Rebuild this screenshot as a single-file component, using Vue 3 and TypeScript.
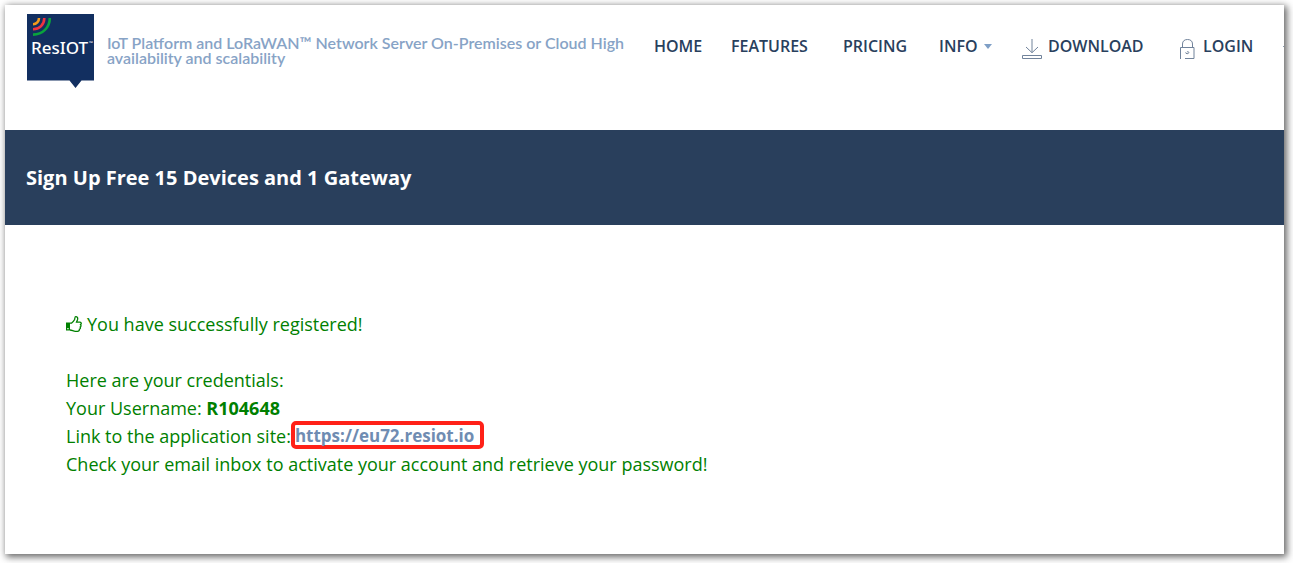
<script setup lang="ts">
interface NavItem {
  label: string
  icon?: 'download' | 'lock'
  menu?: boolean
}

const navItems: NavItem[] = [
  { label: 'HOME' },
  { label: 'FEATURES' },
  { label: 'PRICING' },
  { label: 'INFO', menu: true },
  { label: 'DOWNLOAD', icon: 'download' },
  { label: 'LOGIN', icon: 'lock' },
]

const username = 'R104648'
const siteUrl = 'https://eu72.resiot.io'
</script>

<template>
  <div class="page">
    <div class="sheet">
      <header class="header">
        <a class="brand" href="#" aria-label="ResIOT">
          <svg width="67" height="74" viewBox="0 0 67 74" aria-hidden="true">
            <path d="M0 0H67V66.500H54.500L48.500 74L42.500 66.500H0Z" fill="#122f60" />
            <g fill="none" stroke-width="2.600">
              <path d="M6 10.300C9.500 10.300 12 7.500 12 4" stroke="#f39a1b" />
              <path d="M6 15.300C12.500 15.300 17.300 10.500 17.300 4" stroke="#ef3340" />
              <path d="M6 20.600C15.500 20.600 22.800 13.500 22.800 4" stroke="#0aa33c" />
            </g>
            <text x="4" y="40" class="logo-text">ResIOT</text>
            <text x="62" y="31" class="logo-mark">™</text>
          </svg>
        </a>
        <p class="tagline">IoT Platform and LoRaWAN™ Network Server On-Premises or Cloud High availability and scalability</p>
        <nav class="nav">
          <a v-for="item in navItems" :key="item.label" class="nav-link" href="#">
            <svg v-if="item.icon === 'download'" class="nav-icon" width="20" height="21" viewBox="0 0 20 21" aria-hidden="true">
              <path d="M10 0V13.500M4 8L10 13.700L16 8" />
              <path d="M0.500 16.500H19.500V19.500H0.500Z" />
            </svg>
            <svg v-if="item.icon === 'lock'" class="nav-icon lock" width="15" height="21" viewBox="0 0 15 21" aria-hidden="true">
              <path d="M2.500 8.500V5C2.500 2 4.500 0.500 7.500 0.500S12.500 2 12.500 5V8.500" />
              <path d="M0.500 20V8.500H14V19.500H5" />
              <path d="M5.500 13.500C5.500 15 8.800 15.200 8.800 13.500C8.800 12.300 7 12.300 7 13.300" />
            </svg>
            <span>{{ item.label }}</span>
            <svg v-if="item.menu" class="caret" width="8" height="5" viewBox="0 0 8 5" aria-hidden="true">
              <path d="M0 0H8L4 5Z" />
            </svg>
          </a>
          <span class="nav-more" aria-hidden="true"></span>
        </nav>
      </header>

      <section class="banner">
        <h1>Sign Up Free 15 Devices and 1 Gateway</h1>
      </section>

      <main class="content">
        <p class="success">
          <svg width="16" height="17" viewBox="0 0 16 17" aria-hidden="true">
            <path d="M0 6.500H4V14.500H0Z" fill="#008000" />
            <rect x="1.300" y="12" width="1.300" height="1.300" fill="#fff" />
            <path d="M4 7.200H5.400C6.700 6.100 8.200 4.300 8.600 3.500C8.900 2.300 8.800 0.700 9.700 0.700C11.500 0.700 12 2 11.500 3.700L10.500 6.200H14C15.400 6.400 15.700 8 14.500 8.600C15.300 9.500 15.100 10.600 14.200 11.100C14.700 12 14.400 12.900 13.400 13.300C13.500 14.600 12.800 15.300 11.400 15.300H9.300C7.400 15.300 6 14 4 14" fill="none" stroke="#008000" stroke-width="1.300" />
          </svg>
          <span>You have successfully registered!</span>
        </p>
        <p>Here are your credentials:</p>
        <p>Your Username: <strong>{{ username }}</strong></p>
        <p class="site">
          <span>Link to the application site:</span>
          <a class="site-link" :href="siteUrl">{{ siteUrl }}</a>
        </p>
        <p>Check your email inbox to activate your account and retrieve your password!</p>
      </main>
    </div>
  </div>
</template>

<style>
body {
  margin: 0;
  background: #fff;
}
</style>

<style scoped>
.page {
  box-sizing: border-box;
  min-height: 100vh;
  padding: 5px 9px 9px 5px;
  display: flex;
  overflow: hidden;
  font-family: "Open Sans", "Noto Sans", sans-serif;
}

.sheet {
  flex: 1;
  min-width: 0;
  background: #fff;
  box-shadow: 2px 2px 7px 1px rgba(0, 0, 0, 0.6);
}

.header {
  display: flex;
  align-items: flex-start;
  height: 125px;
  overflow: hidden;
}

.brand {
  flex: none;
  margin: 9px 13px 0 22px;
}

.brand svg {
  display: block;
}

.logo-text {
  font: 500 17px "Noto Sans", sans-serif;
  fill: #fff;
}

.logo-mark {
  font: 5px "Noto Sans", sans-serif;
  fill: #fff;
}

.tagline {
  flex: 0 0 520px;
  margin: 30px 0 0;
  color: #87a3c6;
  font: 600 16px/15px Lato, sans-serif;
}

.nav {
  flex: 1;
  display: grid;
  grid-template-columns: 77px 112px 96px 83px 158px 103px 1fr;
  margin: 29px 0 0 27px;
}

.nav-link {
  display: flex;
  align-items: flex-start;
  color: #29405d;
  font: 600 16px/24px "Open Sans", sans-serif;
  text-decoration: none;
}

.nav-icon {
  margin: 5px 6px 0 0;
  fill: none;
  stroke: #71839b;
  stroke-width: 1;
}

.nav-icon.lock {
  margin-right: 8px;
}

.caret {
  margin: 10px 0 0 6px;
  fill: #7f9fc6;
}

.nav-more {
  justify-self: end;
  width: 2px;
  height: 1px;
  margin-top: 12px;
  background: #8c9bb0;
}

.banner {
  padding: 32px 21px;
  background: #293f5c;
}

.banner h1 {
  margin: 0;
  color: #fff;
  font: 700 20px/31px "Open Sans", sans-serif;
}

.content {
  padding: 85px 61px 76px;
  color: #008000;
  font-size: 18px;
  line-height: 28px;
}

.content p {
  margin: 0;
}

.content .success {
  display: flex;
  align-items: center;
  gap: 5px;
  margin-bottom: 28px;
}

.content .site {
  display: flex;
  align-items: flex-start;
  height: 28px;
}

.site-link {
  box-sizing: border-box;
  height: 28px;
  margin-top: -1px;
  padding: 0 6px 0 0;
  border: 4px solid #ff2118;
  border-radius: 5px;
  color: #6f8cb2;
  font-size: 17px;
  font-weight: 700;
  line-height: 22px;
  text-decoration: none;
}
</style>
